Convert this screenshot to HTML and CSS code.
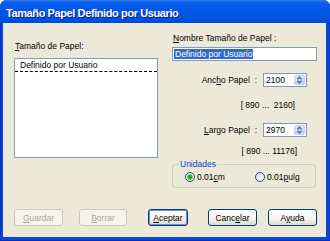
FILE: index.html
```html
<!DOCTYPE html>
<html>
<head>
    <meta charset="utf-8">
    <title>Tamaño Papel Definido por Usuario</title>
    <link rel="stylesheet" href="styles.css">
</head>
<body>
    <div class="window">
        <div class="titlebar">Tamaño Papel Definido por Usuario</div>
        <div class="dialog">
            <div class="content">
                <div class="left-col">
                    <div class="label list-label"><u>T</u>amaño de Papel:</div>
                    <div class="listbox">
                        <div class="list-item">Definido por Usuario</div>
                    </div>
                </div>

                <div class="right-col">
                    <div class="label name-label"><u>N</u>ombre Tamaño de Papel :</div>
                    <div class="textbox"><span class="selected">Definido por Usuario</span></div>

                    <div class="spin-row spin-first">
                        <span class="label">Anc<u>h</u>o Papel&nbsp;&nbsp;:</span>
                        <div class="spin">
                            <span class="spin-value">2100</span>
                            <span class="spin-btn">
                                <svg width="9" height="10" viewBox="0 0 9 10">
                                    <path d="M2.5 4.2 L4.5 2.2 L6.5 4.2" fill="none" stroke="#4d6185" stroke-width="1.3"/>
                                    <path d="M2.5 5.8 L4.5 7.8 L6.5 5.8" fill="none" stroke="#4d6185" stroke-width="1.3"/>
                                </svg>
                            </span>
                        </div>
                    </div>
                    <div class="range range-width">[ 890 ...&nbsp; 2160]</div>

                    <div class="spin-row spin-second">
                        <span class="label"><u>L</u>argo Papel&nbsp;&nbsp;:</span>
                        <div class="spin">
                            <span class="spin-value">2970</span>
                            <span class="spin-btn">
                                <svg width="9" height="10" viewBox="0 0 9 10">
                                    <path d="M2.5 4.2 L4.5 2.2 L6.5 4.2" fill="none" stroke="#4d6185" stroke-width="1.3"/>
                                    <path d="M2.5 5.8 L4.5 7.8 L6.5 5.8" fill="none" stroke="#4d6185" stroke-width="1.3"/>
                                </svg>
                            </span>
                        </div>
                    </div>
                    <div class="range range-length">[ 890 ... 11176]</div>

                    <fieldset class="units">
                        <legend>Unidades</legend>
                        <div class="radio-option"><span class="radio checked"></span><span>0.01<u>c</u>m</span></div>
                        <div class="radio-option"><span class="radio"></span><span>0.01<u>p</u>ulg</span></div>
                    </fieldset>
                </div>
            </div>

            <div class="buttons">
                <button class="btn btn-save" disabled><u>G</u>uardar</button>
                <button class="btn btn-delete" disabled><u>B</u>orrar</button>
                <button class="btn btn-ok btn-default"><u>A</u>ceptar</button>
                <button class="btn btn-cancel">Canc<u>e</u>lar</button>
                <button class="btn btn-help">A<u>y</u>uda</button>
            </div>
        </div>
    </div>
</body>
</html>
```

FILE: styles.css
```css
body {
    margin: 0;
    background: #ffffff;
    font-family: "Liberation Sans", Arial, sans-serif;
}

.window {
    width: 330px;
    height: 241px;
    display: flex;
    flex-direction: column;
    background: #0a48dc;
    border-radius: 7px 7px 0 0;
    box-shadow: inset 1px 0 #0a2fb8, inset -1px 0 #0a2fb8, inset 0 -1px #0a2fb8;
}

/* Title bar */
.titlebar {
    height: 23px;
    box-sizing: border-box;
    padding: 5px 0 0 6px;
    line-height: 16px;
    font-size: 11px;
    font-weight: bold;
    letter-spacing: -0.4px;
    color: #ffffff;
    text-shadow: 1px 1px #0a1883;
    border-radius: 7px 7px 0 0;
    background: linear-gradient(180deg, #3d86f5 0, #0a5feb 2px, #0058e8 10px, #0053e1 18px, #0047d4 23px);
}

.dialog {
    flex: 1;
    margin: 0 4px 4px 3px;
    padding: 10px 9px 11px 11px;
    background: #ece9d8;
    display: flex;
    flex-direction: column;
    font-size: 8.5px;
    line-height: 10px;
    color: #000000;
}

.content {
    display: flex;
    gap: 14px;
}

/* Left column: list of paper sizes */
.left-col {
    width: 144px;
    padding-top: 8px;
}

.list-label {
    padding-left: 1px;
    margin-bottom: 7px;
}

.listbox {
    height: 100px;
    box-sizing: border-box;
    border: 1px solid #7f9db9;
    background: #ffffff;
}

.list-item {
    padding: 1px 4px 1px 5px;
    border-bottom: 1px dashed #000000;
}

/* Right column: fields */
.right-col {
    width: 145px;
    display: flex;
    flex-direction: column;
}

.name-label {
    padding-left: 1px;
}

.textbox {
    margin-top: 4px;
    height: 14px;
    box-sizing: border-box;
    border: 1px solid #7f9db9;
    background: #ffffff;
    padding: 1px 0 0 1px;
}

.selected {
    background: #316ac5;
    color: #ffffff;
    padding: 0 1px;
}

.spin-row {
    display: flex;
    justify-content: flex-end;
    align-items: center;
    padding-right: 10px;
}

.spin-first {
    margin-top: 12px;
}

.spin-second {
    margin-top: 13px;
}

.spin-row .label {
    margin-right: 6px;
}

.spin {
    width: 44px;
    height: 14px;
    box-sizing: border-box;
    border: 1px solid #7f9db9;
    background: #ffffff;
    display: flex;
    align-items: center;
}

.spin-value {
    padding-left: 2px;
}

.spin-btn {
    margin: 0 1px 0 auto;
    width: 11px;
    height: 10px;
    box-sizing: border-box;
    border: 1px solid #c3d3fd;
    border-radius: 2px;
    background: linear-gradient(180deg, #dfe9fe, #b9cdf7);
    display: flex;
    align-items: center;
    justify-content: center;
}

.spin-btn svg {
    display: block;
}

.range {
    margin-top: 13px;
    text-align: right;
}

.range-width {
    padding-right: 22px;
}

.range-length {
    margin-top: 9px;
    padding-right: 20px;
}

/* Units group box */
.units {
    margin: 3px 1px 0 0;
    padding: 3px 0 5px 12px;
    border: 1px solid #d0d0bf;
    border-radius: 3px;
    display: grid;
    grid-template-columns: 70px auto;
    min-width: 0;
}

.units legend {
    margin-left: -6px;
    padding: 0 1px;
    color: #0046d5;
}

.radio-option {
    display: flex;
    align-items: center;
    gap: 2px;
}

.radio {
    width: 10px;
    height: 10px;
    box-sizing: border-box;
    border: 1px solid #1c5180;
    border-radius: 50%;
    background: linear-gradient(135deg, #dcdcd6, #ffffff);
}

.radio.checked {
    background: radial-gradient(circle, #1f9a1f 0, #2fae2f 2px, #9fd89f 2.8px, #f4f4f0 3.3px);
}

/* Bottom buttons */
.buttons {
    margin-top: auto;
    display: flex;
}

.btn {
    height: 17px;
    padding: 0;
    font-family: "Liberation Sans", Arial, sans-serif;
    font-size: 8.5px;
    color: #000000;
    border: 1px solid #003c74;
    border-radius: 3px;
    background: linear-gradient(180deg, #ffffff, #f4f3ee 60%, #dcd8cc);
}

.btn:disabled {
    color: #aca899;
    border-color: #c9c7ba;
    background: #f5f4ea;
}

.btn-default {
    box-shadow: inset 0 0 0 1px #6f8fdc;
}

.btn-save { width: 49px; }
.btn-delete { width: 48px; margin-left: 16px; }
.btn-ok { width: 40px; margin-left: 21px; }
.btn-cancel { width: 49px; margin-left: 20px; }
.btn-help { width: 49px; margin-left: 11px; }
```
